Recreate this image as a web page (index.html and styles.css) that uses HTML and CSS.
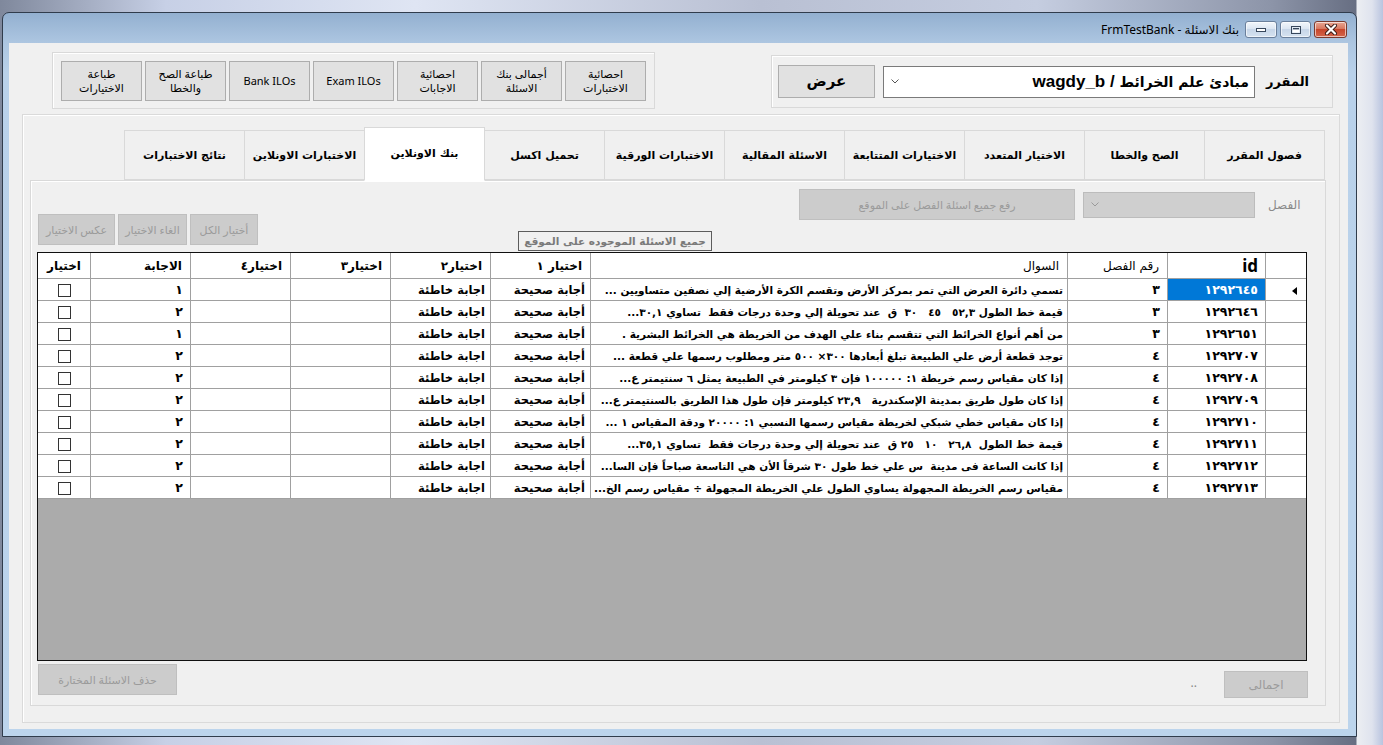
FILE: index.html
```html
<!DOCTYPE html>
<html lang="ar">
<head>
<meta charset="utf-8">
<title>FrmTestBank</title>
<link rel="stylesheet" href="styles.css">
</head>
<body>
<div class="desktop">
  <div class="window">
    <div class="titlebar">
      <div class="title-text" dir="rtl">بنك الاسئلة - FrmTestBank</div>
      <div class="cap-btn cap-min"><svg width="12" height="6" viewBox="0 0 12 6"><rect x="1.5" y="1.5" width="9" height="3" fill="#fff" stroke="#37475c"/></svg></div>
      <div class="cap-btn cap-max"><svg width="12" height="10" viewBox="0 0 12 10"><rect x="1.5" y="1.5" width="9" height="7" fill="none" stroke="#37475c"/><rect x="3" y="3" width="6" height="1.6" fill="#37475c"/><rect x="2.5" y="4.6" width="7" height="3" fill="#fff"/></svg></div>
      <div class="cap-btn cap-close"><svg width="14" height="11" viewBox="0 0 14 11"><path d="M3 1.5 L11 9.5 M11 1.5 L3 9.5" stroke="#3a1a14" stroke-width="4" stroke-linecap="round"/><path d="M3 1.5 L11 9.5 M11 1.5 L3 9.5" stroke="#fff" stroke-width="2.2" stroke-linecap="round"/></svg></div>
    </div>
    <div class="client">
      <div class="top-row">
        <div class="group tools">
          <button class="btn tool">طباعة<br>الاختيارات</button>
          <button class="btn tool">طباعة الصح<br>والخطا</button>
          <button class="btn tool">Bank ILOs</button>
          <button class="btn tool">Exam ILOs</button>
          <button class="btn tool">احصائية<br>الاجابات</button>
          <button class="btn tool">أجمالى بنك<br>الاسئلة</button>
          <button class="btn tool">احصائية<br>الاختبارات</button>
        </div>
        <div class="group course">
          <button class="btn show-btn">عرض</button>
          <div class="combo course-combo">
            <svg class="chev" width="8" height="5" viewBox="0 0 8 5"><path d="M0.5 0.5 L4 4 L7.5 0.5" fill="none" stroke="#555" stroke-width="1"/></svg>
            <span class="combo-text" dir="rtl"><span class="ar">مبادئ علم الخرائط</span> / wagdy_b</span>
          </div>
          <span class="course-label">المقرر</span>
        </div>
      </div>

      <div class="tab-frame">
        <div class="tab-strip" dir="rtl">
          <div class="tab">فصول المقرر</div>
          <div class="tab">الصح والخطا</div>
          <div class="tab">الاختيار المتعدد</div>
          <div class="tab">الاختيارات المتتابعة</div>
          <div class="tab">الاسئلة المقالية</div>
          <div class="tab">الاختبارات الورقية</div>
          <div class="tab">تحميل اكسل</div>
          <div class="tab active">بنك الاونلاين</div>
          <div class="tab">الاختبارات الاونلاين</div>
          <div class="tab">نتائج الاختبارات</div>
        </div>
        <div class="tab-page">
          <div class="controls">
            <div class="sel-buttons">
              <button class="btn dis sel-b1">عكس الاختيار</button>
              <button class="btn dis sel-b2">الغاء الاختيار</button>
              <button class="btn dis sel-b3">أختيار الكل</button>
            </div>
            <div class="all-label">جميع الاسئلة الموجوده على الموقع</div>
            <div class="chapter-box">
              <button class="btn dis upload-btn">رفع جميع اسئلة الفصل على الموقع</button>
              <div class="combo dis-combo">
                <svg class="chev" width="8" height="5" viewBox="0 0 8 5"><path d="M0.5 0.5 L4 4 L7.5 0.5" fill="none" stroke="#9a9a9a" stroke-width="1"/></svg>
              </div>
              <span class="chapter-label">الفصل</span>
            </div>
          </div>

          <div class="grid">
            <table class="data" dir="rtl">
              <colgroup>
                <col class="w-rh"><col class="w-id"><col class="w-ch"><col class="w-q"><col class="w-o"><col class="w-o"><col class="w-o"><col class="w-o"><col class="w-o"><col class="w-chk">
              </colgroup>
              <thead>
                <tr>
                  <th class="rh"></th>
                  <th class="h-id">id</th>
                  <th class="h-reg">رقم الفصل</th>
                  <th class="h-reg">السوال</th>
                  <th>اختيار ١</th>
                  <th>اختيار٢</th>
                  <th>اختيار٣</th>
                  <th>اختيار٤</th>
                  <th>الاجابة</th>
                  <th class="last">اختيار</th>
                </tr>
              </thead>
              <tbody>
                <tr>
                  <td class="rh"><svg width="5" height="8" viewBox="0 0 5 8"><path d="M5 0 L0 4 L5 8 Z" fill="#000"/></svg></td>
                  <td class="n sel">١٢٩٢٦٤٥</td><td class="n">٣</td>
                  <td class="q">تسمي دائرة العرض التي تمر بمركز الأرض وتقسم الكرة الأرضية إلي نصفين متساويين ...</td>
                  <td>أجابة صحيحة</td><td>اجابة خاطئة</td><td></td><td></td><td class="n">١</td>
                  <td class="last"><span class="chk"></span></td>
                </tr>
                <tr>
                  <td class="rh"></td><td class="n">١٢٩٢٦٤٦</td><td class="n">٣</td>
                  <td class="q">قيمة خط الطول ٥٢,٣   ٤٥   ٣٠  ق  عند تحويلة إلي وحدة درجات فقط  تساوي ٣٠,١...</td>
                  <td>أجابة صحيحة</td><td>اجابة خاطئة</td><td></td><td></td><td class="n">٢</td>
                  <td class="last"><span class="chk"></span></td>
                </tr>
                <tr>
                  <td class="rh"></td><td class="n">١٢٩٢٦٥١</td><td class="n">٣</td>
                  <td class="q">من أهم أنواع الخرائط التي تتقسم بناء علي الهدف من الخريطة هي الخرائط البشرية .</td>
                  <td>أجابة صحيحة</td><td>اجابة خاطئة</td><td></td><td></td><td class="n">١</td>
                  <td class="last"><span class="chk"></span></td>
                </tr>
                <tr>
                  <td class="rh"></td><td class="n">١٢٩٢٧٠٧</td><td class="n">٤</td>
                  <td class="q">توجد قطعة أرض علي الطبيعة تبلغ أبعادها ٣٠٠× ٥٠٠ متر ومطلوب رسمها علي قطعة ...</td>
                  <td>أجابة صحيحة</td><td>اجابة خاطئة</td><td></td><td></td><td class="n">٢</td>
                  <td class="last"><span class="chk"></span></td>
                </tr>
                <tr>
                  <td class="rh"></td><td class="n">١٢٩٢٧٠٨</td><td class="n">٤</td>
                  <td class="q">إذا كان مقياس رسم خريطة ١: ١٠٠٠٠٠ فإن ٣ كيلومتر في الطبيعة يمثل ٦ سنتيمتر ع...</td>
                  <td>أجابة صحيحة</td><td>اجابة خاطئة</td><td></td><td></td><td class="n">٢</td>
                  <td class="last"><span class="chk"></span></td>
                </tr>
                <tr>
                  <td class="rh"></td><td class="n">١٢٩٢٧٠٩</td><td class="n">٤</td>
                  <td class="q">إذا كان طول طريق بمدينة الإسكندرية   ٢٣,٩ كيلومتر فإن طول هذا الطريق بالسنتيمتر ع...</td>
                  <td>أجابة صحيحة</td><td>اجابة خاطئة</td><td></td><td></td><td class="n">٢</td>
                  <td class="last"><span class="chk"></span></td>
                </tr>
                <tr>
                  <td class="rh"></td><td class="n">١٢٩٢٧١٠</td><td class="n">٤</td>
                  <td class="q">إذا كان مقياس خطي شبكي لخريطة مقياس رسمها النسبي ١: ٢٠٠٠٠ ودقة المقياس ١ ...</td>
                  <td>أجابة صحيحة</td><td>اجابة خاطئة</td><td></td><td></td><td class="n">٢</td>
                  <td class="last"><span class="chk"></span></td>
                </tr>
                <tr>
                  <td class="rh"></td><td class="n">١٢٩٢٧١١</td><td class="n">٤</td>
                  <td class="q">قيمة خط الطول  ٢٦,٨   ١٠   ٢٥ ق  عند تحويلة إلي وحدة درجات فقط  تساوي ٣٥,١...</td>
                  <td>أجابة صحيحة</td><td>اجابة خاطئة</td><td></td><td></td><td class="n">٢</td>
                  <td class="last"><span class="chk"></span></td>
                </tr>
                <tr>
                  <td class="rh"></td><td class="n">١٢٩٢٧١٢</td><td class="n">٤</td>
                  <td class="q">إذا كانت الساعة فى مدينة  س علي خط طول ٣٠ شرقاً الأن هي التاسعة صباحاً فإن السا...</td>
                  <td>أجابة صحيحة</td><td>اجابة خاطئة</td><td></td><td></td><td class="n">٢</td>
                  <td class="last"><span class="chk"></span></td>
                </tr>
                <tr>
                  <td class="rh"></td><td class="n">١٢٩٢٧١٣</td><td class="n">٤</td>
                  <td class="q">مقياس رسم الخريطة المجهولة يساوي الطول علي الخريطة المجهولة ÷ مقياس رسم الخ...</td>
                  <td>أجابة صحيحة</td><td>اجابة خاطئة</td><td></td><td></td><td class="n">٢</td>
                  <td class="last"><span class="chk"></span></td>
                </tr>
              </tbody>
            </table>
          </div>

          <div class="footer">
            <button class="btn dis del-btn">حذف الاسئلة المختارة</button>
            <span class="dots">..</span>
            <button class="btn dis total-btn">اجمالى</button>
          </div>
        </div>
      </div>
    </div>
  </div>
</div>
</body>
</html>
```

FILE: styles.css
```css
* { box-sizing: border-box; }
html, body { margin: 0; padding: 0; }
body {
  width: 1383px;
  height: 745px;
  overflow: hidden;
  font-family: "Noto Sans", "DejaVu Sans", sans-serif;
  font-size: 12px;
  color: #000;
  background:
    linear-gradient(90deg, rgba(0,0,0,0) 1356px, #eceef2 1357px, #dfe3ee 1372px, #b9c4df 1383px),
    linear-gradient(90deg, #7f889c 0, #c7d0e6 12%, #dfe5f3 30%, #b9c0d3 55%, #c5cde0 75%, #8c94a8 92%, #5b6276 100%);
}
.desktop { padding: 12px 0 0 2px; height: 745px; }

.window {
  width: 1355px;
  height: 725px;
  border: 1px solid #303c4c;
  border-radius: 7px 7px 0 0;
  background: linear-gradient(to bottom, #93b0d0 0, #adc6e1 30px, #b9d1ea 60px, #bcd4ec 100%);
  padding: 0 8px 7px 6px;
  display: flex;
  flex-direction: column;
}
.titlebar {
  height: 30px;
  flex: none;
  display: flex;
  justify-content: flex-end;
  align-items: flex-start;
  padding: 8px 1px 0 0;
}
.title-text {
  font-family: "Noto Sans", "DejaVu Sans", sans-serif;
  font-size: 12px;
  line-height: 17px;
  margin-right: 3px;
  color: #000;
}
.cap-btn {
  height: 17px;
  border: 1px solid #6a7f9b;
  border-radius: 3px;
  display: flex;
  align-items: center;
  justify-content: center;
  margin-left: 3px;
  background: linear-gradient(to bottom, #f2f6fb 0, #dce6f2 45%, #c7d6e8 50%, #d6e3f1 100%);
  box-shadow: inset 0 0 0 1px rgba(255,255,255,0.6);
}
.cap-min { width: 32px; }
.cap-max { width: 31px; }
.cap-close {
  width: 33px;
  border-color: #7a3a2e;
  background: linear-gradient(to bottom, #e8a793 0, #d8775f 45%, #c7462b 50%, #d4664c 100%);
}

.client {
  flex: 1;
  background: #f0f0f0;
  display: flex;
  flex-direction: column;
}

/* top row */
.top-row {
  height: 71px;
  flex: none;
  display: flex;
  justify-content: space-between;
  align-items: flex-start;
  padding: 0 15px 0 43px;
}
.group {
  border: 1px solid #d9d9d9;
  box-shadow: inset 1px 1px 0 #fff;
}
.tools {
  margin-top: 9px;
  width: 603px;
  height: 57px;
  display: flex;
  gap: 3px;
  padding: 8px 0 0 8px;
}
.btn {
  font-family: "Noto Sans", "DejaVu Sans", sans-serif;
  background: #e1e1e1;
  border: 1px solid #adadad;
  color: #000;
  padding: 0;
  margin: 0;
  line-height: 1.25;
}
.tool {
  width: 81px;
  height: 40px;
  font-size: 11px;
}
.course {
  margin-top: 12px;
  width: 562px;
  height: 53px;
  display: flex;
  align-items: center;
  padding-left: 6px;
}
.show-btn {
  width: 97px;
  height: 33px;
  font-size: 15px;
  font-weight: bold;
  font-family: "DejaVu Sans", sans-serif;
}
.combo {
  display: flex;
  align-items: center;
  background: #fff;
  border: 1px solid #7a7a7a;
}
.course-combo {
  margin-left: 8px;
  width: 372px;
  height: 32px;
  padding: 0 5px 0 7px;
}
.chev { flex: none; }
.combo-text {
  flex: 1;
  text-align: right;
  font-family: "Liberation Sans", "DejaVu Sans", sans-serif;
  font-weight: bold;
  font-size: 17px;
  white-space: nowrap;
  overflow: hidden;
}
.combo-text .ar {
  font-family: "DejaVu Sans", sans-serif;
  font-size: 14px;
}
.course-label {
  margin-left: 11px;
  font-family: "DejaVu Sans", sans-serif;
  font-weight: bold;
  font-size: 13px;
}

/* tabs */
.tab-frame {
  margin-left: 13px;
  width: 1318px;
  height: 609px;
  border: 1px solid #dadada;
  box-shadow: inset 1px 1px 0 #fff;
  display: flex;
  flex-direction: column;
  padding: 14px 14px 0 7px;
}
.tab-strip {
  display: flex;
  height: 52px;
  align-items: flex-end;
  padding-right: 0;
  position: relative;
  z-index: 1;
  margin-bottom: -1px;
}
.tab {
  width: 121px;
  height: 50px;
  margin-bottom: 1px;
  border: 1px solid #d9d9d9;
  margin-left: -1px;
  background: #f0f0f0;
  display: flex;
  align-items: center;
  justify-content: center;
  font-family: "DejaVu Sans", sans-serif;
  font-weight: bold;
  font-size: 11px;
  white-space: nowrap;
}
.tab.active {
  height: 54px;
  margin-bottom: 0;
  background: #fff;
  border-bottom-color: #fff;
  padding-bottom: 2px;
}
.tab-page {
  width: 1296px;
  height: 526px;
  border: 1px solid #d9d9d9;
  background: #f0f0f0;
  box-shadow: inset 1px 1px 0 #fff;
  display: flex;
  flex-direction: column;
  padding: 0 17px 0 6px;
}

/* controls */
.controls {
  height: 71px;
  flex: none;
  display: flex;
  align-items: flex-start;
}
.sel-buttons {
  align-self: flex-end;
  margin: 0 0 7px 1px;
  display: flex;
  gap: 3px;
}
.dis {
  background: #cccccc;
  border: 1px solid #bfbfbf;
  color: #9b9b9b;
  font-size: 11px;
}
.sel-buttons .btn { height: 31px; }
.sel-b1 { width: 77px; }
.sel-b2 { width: 69px; }
.sel-b3 { width: 68px; }
.all-label {
  align-self: flex-end;
  margin: 0 0 1px 260px;
  width: 194px;
  height: 20px;
  border: 1px solid #5c5c5c;
  color: #7a7a7a;
  font-family: "DejaVu Sans", sans-serif;
  font-weight: bold;
  font-size: 10.5px;
  line-height: 18px;
  text-align: center;
  white-space: nowrap;
  overflow: hidden;
}
.chapter-box {
  margin: 8px 0 0 87px;
  display: flex;
  align-items: center;
}
.upload-btn {
  width: 276px;
  height: 31px;
}
.dis-combo {
  margin-left: 8px;
  width: 172px;
  height: 26px;
  background: #cfcfcf;
  border: 1px solid #bcbcbc;
  padding-left: 7px;
}
.chapter-label {
  margin-left: 13px;
  color: #8a8a8a;
  font-family: "DejaVu Sans", sans-serif;
  font-size: 12px;
}

/* grid */
.grid {
  width: 1270px;
  height: 409px;
  flex: none;
  border: 1px solid #101010;
  background: #ababab;
  overflow: hidden;
}
.data {
  width: 1268px;
  table-layout: fixed;
  border-collapse: separate;
  border-spacing: 0;
  background: #fff;
  font-family: "DejaVu Sans", sans-serif;
  font-size: 11.5px;
  font-weight: bold;
}
.w-rh { width: 41px; }
.w-id { width: 98px; }
.w-ch { width: 100px; }
.w-q { width: 477px; }
.w-o { width: 100px; }
.w-chk { width: 52px; }
.data th, .data td {
  border-left: 1px solid #a0a0a0;
  border-bottom: 1px solid #a0a0a0;
  text-align: right;
  padding: 0 5px 0 2px;
  white-space: pre;
  overflow: hidden;
}
.data th {
  height: 26px;
  font-size: 12px;
  font-weight: bold;
  padding-right: 8px;
}
.data th.h-reg { font-weight: normal; font-size: 12px; }
.data th.h-id {
  font-family: "Noto Sans", "DejaVu Sans", sans-serif;
  font-weight: bold;
  font-size: 17px;
  padding-right: 7px;
}
.data td { height: 22px; }
.data td.n { font-size: 12.5px; padding-right: 7px; }
.data .last { border-left: none; text-align: center; padding: 0; }
.data td.rh { text-align: right; padding: 2px 9px 0 0; }
.data td.sel { background: #0078d7; color: #fff; }
.data td.q { padding: 0 4px 0 0; font-size: 10.5px; }
.chk {
  display: inline-block;
  width: 13px;
  height: 13px;
  border: 1px solid #333;
  background: #fff;
  vertical-align: middle;
}

/* footer */
.footer {
  flex: 1;
  display: flex;
  align-items: flex-start;
  padding: 3px 0 0 1px;
}
.del-btn { width: 139px; height: 31px; }
.dots {
  margin: 10px 27px 0 auto;
  color: #8a8a8a;
  font-size: 12px;
}
.total-btn {
  margin: 7px 0 0 0;
  width: 84px;
  height: 27px;
  font-size: 12px;
}
```
